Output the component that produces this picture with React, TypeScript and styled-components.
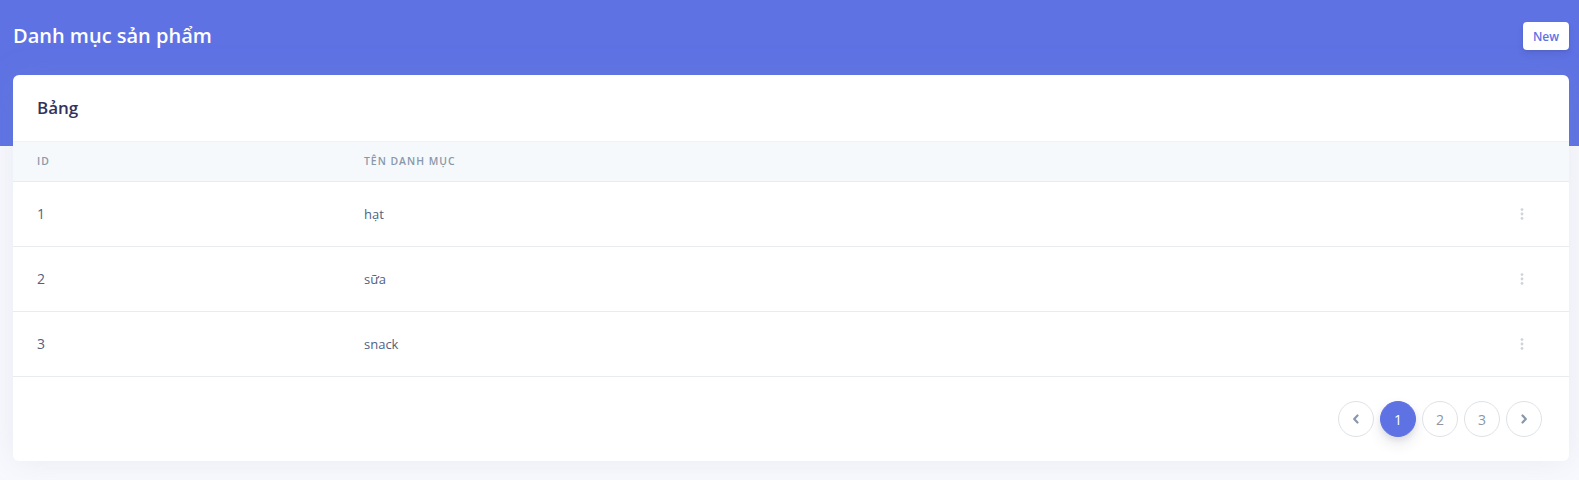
import React from "react";
import styled, { createGlobalStyle } from "styled-components";

const GlobalStyle = createGlobalStyle`
  * { box-sizing: border-box; }
  html, body { margin: 0; padding: 0; }
  body {
    font-family: "Open Sans", "Noto Sans", sans-serif;
    background: #f8f9fe;
    color: #525f7f;
  }
`;

const Page = styled.div`
  min-height: 480px;
  background: linear-gradient(to bottom, #5e72e4 0, #5e72e4 146px, #f8f9fe 146px);
  padding: 0 10px 20px 13px;
`;

const TopBar = styled.div`
  height: 72px;
  display: flex;
  align-items: center;
  justify-content: space-between;
`;

const Title = styled.h1`
  margin: 0;
  font-size: 20px;
  font-weight: 600;
  color: #fff;
  line-height: 1.5;
`;

const NewButton = styled.button`
  height: 28px;
  padding: 0 10px;
  border: 0;
  border-radius: 4px;
  background: #fff;
  color: #5e72e4;
  font-family: inherit;
  font-size: 12px;
  font-weight: 600;
  box-shadow: 0 4px 6px rgba(50, 50, 93, 0.11), 0 1px 3px rgba(0, 0, 0, 0.08);
  cursor: pointer;
`;

const Card = styled.div`
  margin-top: 3px;
  background: #fff;
  border-radius: 6px;
  box-shadow: 0 0 2rem 0 rgba(136, 152, 170, 0.15);
  overflow: hidden;
`;

const CardHeader = styled.div`
  padding: 20px 24px;
  border-bottom: 1px solid rgba(0, 0, 0, 0.05);
`;

const CardTitle = styled.h3`
  margin: 0;
  font-size: 17px;
  font-weight: 600;
  line-height: 1.5;
  color: #32325d;
`;

const Row = styled.div<{ $head?: boolean }>`
  display: grid;
  grid-template-columns: 327px 1fr auto;
  align-items: center;
  background: ${(p) => (p.$head ? "#f6f9fc" : "#fff")};
  border-bottom: 1px solid #e9ecef;
`;

const HeadCell = styled.div`
  padding: 12px 24px;
  font-size: 10.4px;
  line-height: 1.5;
  font-weight: 600;
  letter-spacing: 1px;
  text-transform: uppercase;
  color: #8898aa;
`;

const Cell = styled.div<{ $id?: boolean }>`
  padding: 16px 24px;
  font-size: ${(p) => (p.$id ? "14px" : "13px")};
  line-height: 32px;
  color: #525f7f;
`;

const ActionCell = styled.div`
  padding: 16px 31px 16px 24px;
  display: flex;
  justify-content: flex-end;
`;

const IconButton = styled.button`
  width: 32px;
  height: 32px;
  border: 0;
  background: transparent;
  display: flex;
  align-items: center;
  justify-content: center;
  color: #ced4da;
  padding: 0;
`;

const CardFooter = styled.div`
  padding: 24px;
  display: flex;
  justify-content: flex-end;
`;

const Pagination = styled.ul`
  list-style: none;
  margin: 0;
  padding: 0;
  display: flex;
`;

const PageLink = styled.li<{ $active?: boolean }>`
  width: 36px;
  height: 36px;
  margin: 0 3px;
  border-radius: 50%;
  display: flex;
  align-items: center;
  justify-content: center;
  font-size: 14px;
  border: 1px solid ${(p) => (p.$active ? "#5e72e4" : "#dee2e6")};
  background: ${(p) => (p.$active ? "#5e72e4" : "#fff")};
  color: ${(p) => (p.$active ? "#fff" : "#8898aa")};
  box-shadow: ${(p) =>
    p.$active ? "0 7px 14px rgba(50,50,93,.1), 0 3px 6px rgba(0,0,0,.08)" : "none"};
`;

const Kebab = () => (
  <svg width="4" height="12" viewBox="0 0 4 12" fill="currentColor">
    <circle cx="2" cy="1.6" r="1.4" />
    <circle cx="2" cy="6" r="1.4" />
    <circle cx="2" cy="10.4" r="1.4" />
  </svg>
);

const Chevron = ({ dir }: { dir: "left" | "right" }) => (
  <svg width="8" height="10" viewBox="0 0 8 10">
    <path
      d={dir === "left" ? "M5.5 1.5 L2.2 5 L5.5 8.5" : "M2.5 1.5 L5.8 5 L2.5 8.5"}
      fill="none"
      stroke="#8898aa"
      strokeWidth="2.2"
      strokeLinecap="round"
      strokeLinejoin="round"
    />
  </svg>
);

const rows = [
  { id: 1, name: "hạt" },
  { id: 2, name: "sữa" },
  { id: 3, name: "snack" },
];

export default function App() {
  return (
    <>
      <GlobalStyle />
      <Page>
        <TopBar>
          <Title>Danh mục sản phẩm</Title>
          <NewButton>New</NewButton>
        </TopBar>
        <Card>
          <CardHeader>
            <CardTitle>Bảng</CardTitle>
          </CardHeader>
          <Row $head>
            <HeadCell>ID</HeadCell>
            <HeadCell>Tên danh mục</HeadCell>
            <HeadCell />
          </Row>
          {rows.map((r) => (
            <Row key={r.id}>
              <Cell $id>{r.id}</Cell>
              <Cell>{r.name}</Cell>
              <ActionCell>
                <IconButton aria-label="actions">
                  <Kebab />
                </IconButton>
              </ActionCell>
            </Row>
          ))}
          <CardFooter>
            <Pagination>
              <PageLink>
                <Chevron dir="left" />
              </PageLink>
              <PageLink $active>1</PageLink>
              <PageLink>2</PageLink>
              <PageLink>3</PageLink>
              <PageLink>
                <Chevron dir="right" />
              </PageLink>
            </Pagination>
          </CardFooter>
        </Card>
      </Page>
    </>
  );
}
